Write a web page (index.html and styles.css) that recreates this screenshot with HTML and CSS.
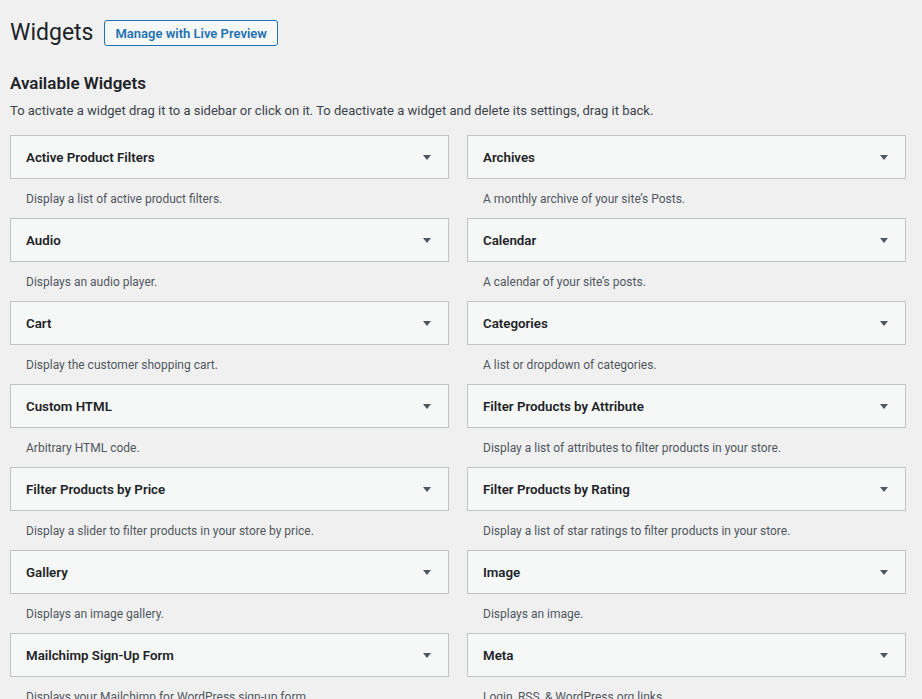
FILE: index.html
```html
<!DOCTYPE html>
<html lang="en">
<head>
<meta charset="utf-8">
<title>Widgets</title>
<link rel="stylesheet" href="styles.css">
</head>
<body>
<div class="wrap">
  <div class="header">
    <h1 class="title">Widgets</h1>
    <a class="btn" href="#">Manage with Live Preview</a>
  </div>
  <h2 class="section">Available Widgets</h2>
  <p class="intro">To activate a widget drag it to a sidebar or click on it. To deactivate a widget and delete its settings, drag it back.</p>
  <div class="grid">
    <div class="widget"><div class="widget-top"><span class="name">Active Product Filters</span><span class="caret"></span></div><div class="desc">Display a list of active product filters.</div></div>
    <div class="widget"><div class="widget-top"><span class="name">Archives</span><span class="caret"></span></div><div class="desc">A monthly archive of your site’s Posts.</div></div>
    <div class="widget"><div class="widget-top"><span class="name">Audio</span><span class="caret"></span></div><div class="desc">Displays an audio player.</div></div>
    <div class="widget"><div class="widget-top"><span class="name">Calendar</span><span class="caret"></span></div><div class="desc">A calendar of your site’s posts.</div></div>
    <div class="widget"><div class="widget-top"><span class="name">Cart</span><span class="caret"></span></div><div class="desc">Display the customer shopping cart.</div></div>
    <div class="widget"><div class="widget-top"><span class="name">Categories</span><span class="caret"></span></div><div class="desc">A list or dropdown of categories.</div></div>
    <div class="widget"><div class="widget-top"><span class="name">Custom HTML</span><span class="caret"></span></div><div class="desc">Arbitrary HTML code.</div></div>
    <div class="widget"><div class="widget-top"><span class="name">Filter Products by Attribute</span><span class="caret"></span></div><div class="desc">Display a list of attributes to filter products in your store.</div></div>
    <div class="widget"><div class="widget-top"><span class="name">Filter Products by Price</span><span class="caret"></span></div><div class="desc">Display a slider to filter products in your store by price.</div></div>
    <div class="widget"><div class="widget-top"><span class="name">Filter Products by Rating</span><span class="caret"></span></div><div class="desc">Display a list of star ratings to filter products in your store.</div></div>
    <div class="widget"><div class="widget-top"><span class="name">Gallery</span><span class="caret"></span></div><div class="desc">Displays an image gallery.</div></div>
    <div class="widget"><div class="widget-top"><span class="name">Image</span><span class="caret"></span></div><div class="desc">Displays an image.</div></div>
    <div class="widget"><div class="widget-top"><span class="name">Mailchimp Sign-Up Form</span><span class="caret"></span></div><div class="desc">Displays your Mailchimp for WordPress sign-up form</div></div>
    <div class="widget"><div class="widget-top"><span class="name">Meta</span><span class="caret"></span></div><div class="desc">Login, RSS, &amp; WordPress.org links.</div></div>
  </div>
</div>
</body>
</html>
```

FILE: styles.css
```css
html, body {
  margin: 0;
  padding: 0;
  background: #f0f0f1;
  color: #1d2327;
  font-family: Roboto, "Liberation Sans", sans-serif;
  font-size: 13px;
}

.wrap {
  padding: 20px 16px 0 10px;
}

.header {
  display: flex;
  align-items: center;
  gap: 11px;
  height: 26px;
}

.title {
  margin: 0;
  font-size: 23px;
  font-weight: 400;
  line-height: 26px;
}

.btn {
  display: inline-flex;
  align-items: center;
  box-sizing: border-box;
  height: 26px;
  padding: 0 10px;
  border: 1px solid #2271b1;
  border-radius: 3px;
  background: #f6f7f7;
  color: #2271b1;
  font-size: 13px;
  font-weight: 600;
  text-decoration: none;
}

.section {
  margin: 25px 0 0;
  font-size: 17px;
  font-weight: 600;
  line-height: 24px;
}

.intro {
  margin: 7px 0 0;
  line-height: 18px;
  color: #3c434a;
}

.grid {
  display: grid;
  grid-template-columns: 1fr 1fr;
  column-gap: 18px;
  margin-top: 15px;
}

.widget-top {
  box-sizing: border-box;
  height: 44px;
  display: flex;
  align-items: center;
  justify-content: space-between;
  padding: 0 17px 0 15px;
  border: 1px solid #c3c4c7;
  background: #f6f7f7;
}

.name {
  font-size: 13.3px;
  font-weight: 600;
}

.caret {
  width: 0;
  height: 0;
  border-left: 4px solid transparent;
  border-right: 4px solid transparent;
  border-top: 5px solid #50575e;
}

.desc {
  height: 38px;
  padding-top: 1px;
  line-height: 38px;
  padding-left: 16px;
  font-size: 12px;
  color: #50575e;
  white-space: nowrap;
}
```
